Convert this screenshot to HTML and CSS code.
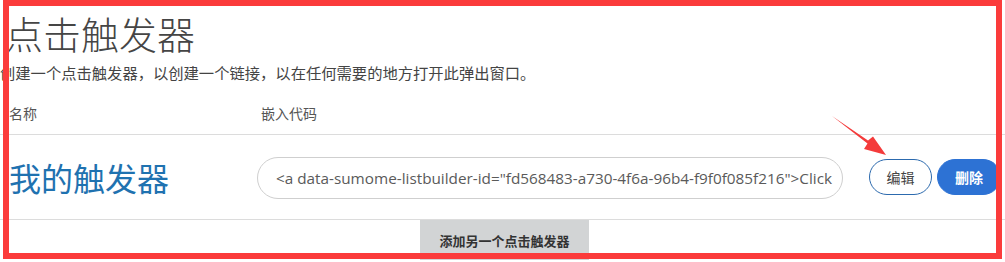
FILE: index.html
```html
<!DOCTYPE html>
<html lang="zh-CN">
<head>
<meta charset="utf-8">
<title>点击触发器</title>
<link rel="stylesheet" href="styles.css">
</head>
<body>
<div class="page">
  <h1 class="title">点击触发器</h1>
  <p class="desc">创建一个点击触发器，以创建一个链接，以在任何需要的地方打开此弹出窗口。</p>
  <div class="thead">
    <div class="col-name">名称</div>
    <div class="col-code">嵌入代码</div>
  </div>
  <div class="trow">
    <div class="cell-name">我的触发器</div>
    <div class="code-box">&lt;a data-sumome-listbuilder-id="fd568483-a730-4f6a-96b4-f9f0f085f216"&gt;Click</div>
    <div class="actions">
      <button class="btn btn-edit">编辑</button>
      <button class="btn btn-delete">删除</button>
    </div>
  </div>
  <div class="add-wrap">
    <button class="btn-add">添加另一个点击触发器</button>
  </div>
  <svg class="arrow" width="70" height="50" viewBox="825 110 70 50">
    <polygon points="832,116 868,140.5 873,136.5 886,155 864,149 867.5,143.5" fill="#f43b3b"/>
  </svg>
  <div class="frame"></div>
</div>
</body>
</html>
```
FILE: styles.css
```css
html, body {
  margin: 0;
  padding: 0;
  background: #ffffff;
}
body {
  font-family: "Noto Sans CJK SC", "Open Sans", sans-serif;
  color: #444;
}
.page {
  position: relative;
  width: 1005px;
  height: 262px;
  overflow: hidden;
}
.title {
  margin: 0;
  padding: 11px 0 0 5px;
  font-size: 38px;
  line-height: 44px;
  font-weight: 300;
  color: #454545;
}
.desc {
  margin: 7px 0 0 0;
  font-size: 15.3px;
  line-height: 20px;
  color: #444;
}
.thead {
  display: flex;
  margin-top: 21px;
  padding-bottom: 11px;
  border-bottom: 1px solid #dcdcdc;
  font-size: 14px;
  line-height: 20px;
  color: #555;
}
.col-name {
  width: 252px;
  padding-left: 9px;
}
.col-code {
  flex: 1;
}
.trow {
  display: flex;
  align-items: center;
  height: 84px;
  border-bottom: 1px solid #dcdcdc;
}
.cell-name {
  width: 248px;
  padding-left: 9px;
  font-size: 32px;
  line-height: 40px;
  color: #1f72b0;
}
.code-box {
  box-sizing: border-box;
  width: 586px;
  height: 42px;
  margin-top: 1px;
  padding: 0 18px;
  border: 1px solid #cfcfcf;
  border-radius: 21px;
  font-family: "Open Sans", sans-serif;
  font-size: 15.3px;
  line-height: 40px;
  color: #5a5a5a;
  white-space: nowrap;
  overflow: hidden;
}
.actions {
  display: flex;
  gap: 5px;
  margin-left: 26px;
}
.btn {
  box-sizing: border-box;
  width: 64px;
  height: 36px;
  border-radius: 18px;
  font-family: "Noto Sans CJK SC", sans-serif;
  font-size: 14px;
  padding: 0;
  cursor: pointer;
}
.btn-edit {
  width: 63px;
  background: #fff;
  border: 1px solid #2c6aae;
  color: #444;
}
.btn-delete {
  background: #2d72d4;
  border: 1px solid #2d72d4;
  color: #fff;
  font-weight: 700;
}
.add-wrap {
  display: flex;
  padding-left: 420px;
}
.btn-add {
  width: 169px;
  height: 40px;
  border: none;
  background: #d2d4d5;
  color: #333;
  font-family: "Noto Sans CJK SC", sans-serif;
  font-size: 13px;
  font-weight: 700;
  padding: 0;
}
.arrow {
  position: absolute;
  left: 825px;
  top: 110px;
}
.frame {
  position: absolute;
  left: 3px;
  top: 0;
  width: 999px;
  height: 259px;
  box-sizing: border-box;
  border: 6px solid #fb3b3b;
  pointer-events: none;
}
```
